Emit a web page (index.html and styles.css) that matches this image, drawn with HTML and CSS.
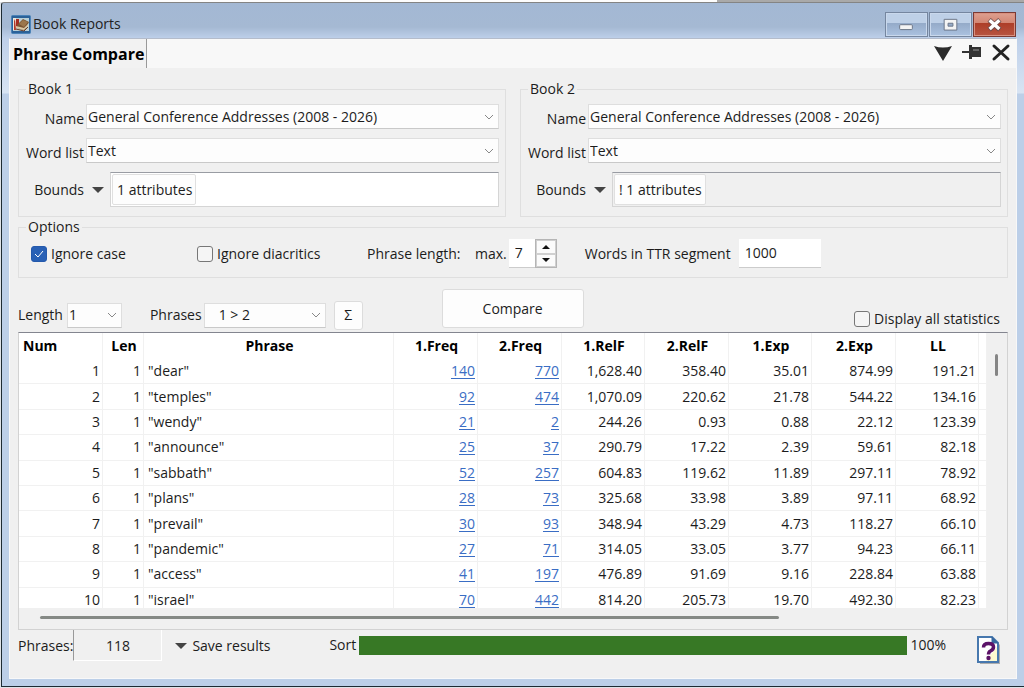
FILE: index.html
```html
<!DOCTYPE html>
<html lang="en">
<head>
<meta charset="utf-8">
<title>Book Reports</title>
<link rel="stylesheet" href="styles.css">
</head>
<body>
<div class="window">
  <header class="titlebar">
    <svg class="app-icon" viewBox="0 0 20 19" aria-hidden="true">
      <rect x=".5" y=".5" width="19" height="18" rx="1" fill="#2b6299" stroke="#4b83b8"/>
      <path d="M2 3h16v13H2z" fill="#b9cfd6"/>
      <path d="M2 3h3v12H2z" fill="#efe9de"/>
      <path d="M3 6l1-2 1 11H3z" fill="#b43a2a"/>
      <path d="M5 4h3v9H5z" fill="#a52c20"/>
      <path d="M6 10l6-6 6 3-4 8-6-1z" fill="#7a5433"/>
      <path d="M8 9l4-4 5 2-4 5z" fill="#9b764c"/>
      <path d="M5 11l8 2 4-4v2l-4 4-8-2z" fill="#d9c6a2"/>
      <path d="M5 14l8 2 4-4" fill="none" stroke="#6c3c24"/>
    </svg>
    <h1 class="window-title">Book Reports</h1>
    <div class="window-buttons">
      <button class="win-btn" aria-label="Minimize"><svg viewBox="0 0 42 23"><rect x="14" y="12" width="13" height="5" rx="1" fill="#f4f4f4" stroke="#6b7587"/></svg></button>
      <button class="win-btn" aria-label="Maximize"><svg viewBox="0 0 42 23"><path fill-rule="evenodd" d="M14.500 6.500h13v11h-13zM18.500 10.500v3h5v-3z" fill="#f4f4f4" stroke="#6b7587"/></svg></button>
      <button class="win-btn win-close" aria-label="Close"><svg viewBox="0 0 42 23"><path d="M15.500 7l11 10M26.500 7l-11 10" stroke="#6d4a4a" stroke-width="5"/><path d="M16 7.500l10 9M26 7.500l-10 9" stroke="#fff" stroke-width="3.500"/></svg></button>
    </div>
  </header>

  <main class="content">
    <div class="tabstrip">
      <button class="tab">Phrase Compare</button>
      <div class="tab-tools">
        <button class="tool" aria-label="Menu"><svg viewBox="0 0 20 20"><path d="M1 4q9 3 18 0l-9 15z" fill="#2b2b2b"/></svg></button>
        <button class="tool" aria-label="Pin"><svg viewBox="0 0 20 20"><path d="M0 9h8v2H0zM7 3h3v2h9v10h-9v2H7z" fill="#333"/><path d="M11 7h6v2h-6z" fill="#666"/></svg></button>
        <button class="tool" aria-label="Close tab"><svg viewBox="0 0 20 20"><path d="M3 4l14 13M17 4L3 17" stroke="#222" stroke-width="3" stroke-linecap="round"/></svg></button>
      </div>
    </div>

    <div class="panel">
      <div class="books">
        <fieldset class="group">
          <legend>Book 1</legend>
          <div class="field"><label for="name1">Name</label><select id="name1" class="select"><option>General Conference Addresses (2008 - 2026)</option></select></div>
          <div class="field"><label for="list1">Word list</label><select id="list1" class="select"><option>Text</option></select></div>
          <div class="field bounds"><button class="drop">Bounds<span class="caret"></span></button><div class="bounds-box"><button class="chip">1 attributes</button></div></div>
        </fieldset>
        <fieldset class="group">
          <legend>Book 2</legend>
          <div class="field"><label for="name2">Name</label><select id="name2" class="select"><option>General Conference Addresses (2008 - 2026)</option></select></div>
          <div class="field"><label for="list2">Word list</label><select id="list2" class="select"><option>Text</option></select></div>
          <div class="field bounds"><button class="drop">Bounds<span class="caret"></span></button><div class="bounds-box muted"><button class="chip">! 1 attributes</button></div></div>
        </fieldset>
      </div>

      <fieldset class="group options">
        <legend>Options</legend>
        <div class="options-row">
          <label class="check case"><input type="checkbox" checked>Ignore case</label>
          <label class="check diacritics"><input type="checkbox">Ignore diacritics</label>
          <span class="length-label">Phrase length:</span>
          <label for="max">max.</label>
          <div class="spinner">
            <input id="max" class="textbox" type="text" value="7">
            <div class="spin-buttons">
              <button aria-label="Increase"><span class="up"></span></button>
              <button aria-label="Decrease"><span class="down"></span></button>
            </div>
          </div>
          <label class="ttr-label" for="ttr">Words in TTR segment</label>
          <input id="ttr" class="textbox ttr" type="text" value="1000">
        </div>
      </fieldset>

      <div class="toolbar">
        <label for="len">Length</label>
        <select id="len" class="select len-select"><option>1</option></select>
        <label for="dir">Phrases</label>
        <select id="dir" class="select dir-select"><option>1 &gt; 2</option></select>
        <button class="button sigma">Σ</button>
        <button class="button compare">Compare</button>
        <label class="check all-stats"><input type="checkbox">Display all statistics</label>
      </div>

      <div class="grid-frame">
        <div class="grid-view">
          <table>
            <colgroup><col class="c-num"><col class="c-len"><col><col class="c-freq"><col class="c-freq"><col class="c-val"><col class="c-freq"><col class="c-val"><col class="c-freq"><col class="c-val"><col class="c-end"></colgroup>
            <thead><tr><th class="first">Num</th><th>Len</th><th>Phrase</th><th>1.Freq</th><th>2.Freq</th><th>1.RelF</th><th>2.RelF</th><th>1.Exp</th><th>2.Exp</th><th>LL</th><th></th></tr></thead>
            <tbody>
              <tr><td>1</td><td>1</td><td>"dear"</td><td><a href="#">140</a></td><td><a href="#">770</a></td><td>1,628.40</td><td>358.40</td><td>35.01</td><td>874.99</td><td>191.21</td><td></td></tr>
              <tr><td>2</td><td>1</td><td>"temples"</td><td><a href="#">92</a></td><td><a href="#">474</a></td><td>1,070.09</td><td>220.62</td><td>21.78</td><td>544.22</td><td>134.16</td><td></td></tr>
              <tr><td>3</td><td>1</td><td>"wendy"</td><td><a href="#">21</a></td><td><a href="#">2</a></td><td>244.26</td><td>0.93</td><td>0.88</td><td>22.12</td><td>123.39</td><td></td></tr>
              <tr><td>4</td><td>1</td><td>"announce"</td><td><a href="#">25</a></td><td><a href="#">37</a></td><td>290.79</td><td>17.22</td><td>2.39</td><td>59.61</td><td>82.18</td><td></td></tr>
              <tr><td>5</td><td>1</td><td>"sabbath"</td><td><a href="#">52</a></td><td><a href="#">257</a></td><td>604.83</td><td>119.62</td><td>11.89</td><td>297.11</td><td>78.92</td><td></td></tr>
              <tr><td>6</td><td>1</td><td>"plans"</td><td><a href="#">28</a></td><td><a href="#">73</a></td><td>325.68</td><td>33.98</td><td>3.89</td><td>97.11</td><td>68.92</td><td></td></tr>
              <tr><td>7</td><td>1</td><td>"prevail"</td><td><a href="#">30</a></td><td><a href="#">93</a></td><td>348.94</td><td>43.29</td><td>4.73</td><td>118.27</td><td>66.10</td><td></td></tr>
              <tr><td>8</td><td>1</td><td>"pandemic"</td><td><a href="#">27</a></td><td><a href="#">71</a></td><td>314.05</td><td>33.05</td><td>3.77</td><td>94.23</td><td>66.11</td><td></td></tr>
              <tr><td>9</td><td>1</td><td>"access"</td><td><a href="#">41</a></td><td><a href="#">197</a></td><td>476.89</td><td>91.69</td><td>9.16</td><td>228.84</td><td>63.88</td><td></td></tr>
              <tr><td>10</td><td>1</td><td>"israel"</td><td><a href="#">70</a></td><td><a href="#">442</a></td><td>814.20</td><td>205.73</td><td>19.70</td><td>492.30</td><td>82.23</td><td></td></tr>
            </tbody>
          </table>
        </div>
        <div class="scroll-y"><div class="thumb-y"></div></div>
        <div class="scroll-x"><div class="thumb-x"></div></div>
      </div>

      <footer class="statusbar">
        <span class="count-label">Phrases:</span>
        <output class="count">118</output>
        <button class="drop save"><span class="caret"></span>Save results</button>
        <div class="progress">
          <label for="sort">Sort</label>
          <progress id="sort" value="100" max="100"></progress>
          <span>100%</span>
        </div>
        <button class="help" aria-label="Help"><svg viewBox="0 0 24 29">
          <path d="M3 3h14l6 6v19H3z" fill="#777" opacity=".55"/>
          <path d="M1 1h14l6 6v19H1z" fill="#fff" stroke="#4778ae" stroke-width="2"/>
          <path d="M9 25h11V11z" fill="#fdf9cf"/>
          <path d="M15 1l6 6h-6z" fill="#39689f" stroke="#39689f"/>
          <path d="M6.500 11.500q0-4 5-4t5 3.500q0 2.500-3 4-2 1-2 3.500" fill="none" stroke="#5c1368" stroke-width="3.500"/>
          <circle cx="11.500" cy="22" r="2.200" fill="#5c1368"/>
        </svg></button>
      </footer>
    </div>
  </main>
</div>
</body>
</html>
```
FILE: styles.css
```css
* { box-sizing: border-box; }

body {
  display: flex;
  flex-direction: column;
  min-height: 100vh;
  margin: 0;
  padding: 2px 0 1px 1px;
  background: #dfe3e8 linear-gradient(90deg, #fdfdfd 70%, #a9a9a9 70%) no-repeat top / 100% 2px;
  color: #1c1c1c;
  font: 14px/20px "Open Sans", "Noto Sans", sans-serif;
}

button, input, select {
  font: inherit;
  color: inherit;
}

button {
  padding: 0;
  border: 0;
  background: none;
}

.window {
  flex: 1;
  display: flex;
  flex-direction: column;
  padding: 0 7px 7px;
  border: 1px solid #1d2b33;
  border-top-color: #848484;
  border-right: 0;
  border-radius: 3px 0 0 0;
  background: linear-gradient(#a3b8d4, #a5b9d3 24px, #bdcfe9 35px, #d8e4f3 90px, #bccfe8 91px);
}

.titlebar {
  display: flex;
  align-items: center;
  height: 35px;
  padding: 7px 1px 0 2px;
  gap: 2px;
}

.app-icon { width: 20px; height: 19px; }

.window-title {
  margin: 0;
  flex: 1;
  font-size: 14px;
  font-weight: 400;
  color: #222;
}

.window-buttons {
  display: flex;
  gap: 1px;
}

.win-btn {
  width: 43px;
  height: 25px;
  border: 1px solid #75869f;
  background: linear-gradient(#bed0e7 10px, #94aac8 10px, #abc2e0);
  box-shadow: inset 0 0 0 1px #c9d8ec;
}

.win-btn svg { display: block; width: 100%; }

.win-close {
  border-color: #7a3a34;
  background: linear-gradient(#dda090, #d38673 10px, #ad3d27 10px, #b75542);
  box-shadow: inset 0 0 0 1px #d9907f;
}

.content {
  flex: 1;
  display: flex;
  flex-direction: column;
  border: 1px solid #f8f8f8;
  border-top-color: #b4bccb;
  background: #f0f0f0;
}

.tabstrip {
  display: flex;
  justify-content: space-between;
  height: 29px;
  background: #f8f8f8;
}

.tab {
  padding: 0 2px 0 3px;
  border-right: 1px solid #999;
  background: #f2f2f2;
  color: #000;
  font-size: 16px;
  font-weight: 700;
}

.tab-tools {
  display: flex;
  align-items: flex-start;
  gap: 9px;
  padding: 3px 5px 0 0;
}

.tool { width: 20px; height: 20px; }
.tool svg { display: block; }

.panel {
  flex: 1;
  padding: 11px 8px 0;
}

.books {
  display: grid;
  grid-template-columns: 1fr 1fr;
  gap: 14px;
}

.group {
  min-width: 0;
  margin: 0;
  padding: 5px 6px 9px 0;
  border: 1px solid #dfdfdf;
}

.group legend {
  margin-left: 7px;
  padding: 0 2px;
}

.field {
  display: flex;
  align-items: flex-start;
  gap: 2px;
  height: 25px;
  margin-bottom: 9px;
}

.field label {
  width: 65px;
  padding-top: 5px;
  text-align: right;
  flex: none;
}

.select {
  width: 100%;
  height: 25px;
  padding: 0 24px 0 1px;
  border: 1px solid #dedede;
  border-bottom-color: #c9c9c9;
  border-radius: 0;
  appearance: none;
  background: #fdfdfd url("data:image/svg+xml,%3Csvg xmlns='http://www.w3.org/2000/svg' width='10' height='6'%3E%3Cpath d='M1 1l4 4 4-4' fill='none' stroke='%23888'/%3E%3C/svg%3E") no-repeat right 4px center;
}

.field .select { flex: 1; min-width: 0; }

.field.bounds {
  align-items: stretch;
  gap: 6px;
  height: auto;
  margin-bottom: 0;
}

.drop {
  display: flex;
  align-items: center;
  justify-content: flex-end;
  gap: 8px;
}

.bounds .drop { width: 85px; }

.caret {
  border: 6px solid transparent;
  border-top-color: #444;
  border-bottom: 0;
}

.bounds-box {
  flex: 1;
  height: 35px;
  padding: 1px;
  border: 1px solid #d5d5d5;
  border-top-color: #999ca3;
  background: #fff;
}

.muted { background: #f0f0f0; }

.chip {
  height: 31px;
  padding: 0 3px 0 4px;
  border: 1px solid #e0e0e0;
  border-radius: 2px;
  background: #fdfdfd;
}

.options { padding: 2px 6px 9px 12px; }
.options legend { margin-left: -5px; }

.options-row {
  display: flex;
  align-items: center;
}

.check {
  display: flex;
  align-items: center;
  gap: 4px;
}

.check input {
  width: 16px;
  height: 16px;
  margin: 0;
  border: 1px solid #777;
  border-radius: 3px;
  appearance: none;
  background: #f5f5f5;
}

.check input:checked {
  border-color: #2459ac;
  background: #2860b5 url("data:image/svg+xml,%3Csvg xmlns='http://www.w3.org/2000/svg' width='10' height='8'%3E%3Cpath d='M1 4l3 3 5-6' fill='none' stroke='%23fff'/%3E%3C/svg%3E") no-repeat center;
}

.case { width: 166px; }
.diacritics { width: 170px; }
.length-label { width: 108px; }

.textbox {
  height: 29px;
  border: 0;
  border-bottom: 1px solid #ccc;
  background: #fff;
  padding: 0 6px 2px;
}

.spinner {
  display: flex;
  margin: 0 28px 0 2px;
}

.spinner .textbox { width: 26px; }

.spin-buttons {
  display: grid;
  width: 22px;
  border: 1px solid #b5b5b5;
}

.spin-buttons button {
  display: grid;
  place-items: center;
  border: 1px solid #d0d0d0;
  background: #fbfbfb;
}

.up, .down {
  border: 4px solid transparent;
}
.up { border-top: 0; border-bottom-color: #111; }
.down { border-bottom: 0; border-top-color: #111; }

.ttr-label { margin-right: 8px; }
.ttr { width: 82px; }

.toolbar {
  display: flex;
  align-items: center;
  height: 54px;
  padding-top: 20px;
}

.len-select { width: 55px; margin: 0 28px 0 4px; }
.dir-select { width: 122px; margin: 0 8px 0 2px; padding-left: 14px; }

.button {
  border: 1px solid #dcdcdc;
  border-radius: 3px;
  background: #fdfdfd;
}

.sigma { width: 29px; height: 29px; }

.compare {
  align-self: flex-end;
  width: 142px;
  height: 39px;
  margin: 0 0 4px 79px;
}

.all-stats {
  margin: 8px 8px 0 auto;
}

.grid-frame {
  display: grid;
  grid-template: 275px 21px / 1fr 20px;
  border: 1px solid #d2d2d2;
  border-top-color: #83858f;
}

.grid-view {
  overflow: hidden;
  background: #fff;
}

table {
  width: 100%;
  height: 280px;
  table-layout: fixed;
  border-collapse: separate;
  border-spacing: 0;
}

.c-num { width: 84px; }
.c-len { width: 41px; }
.c-freq { width: 84px; }
.c-val { width: 83px; }
.c-end { width: 8px; }

th, td {
  padding: 0 2px 0 4px;
  border-right: 1px solid #f1f1f1;
  border-bottom: 1px solid #f1f1f1;
  text-align: right;
  white-space: nowrap;
}

th {
  height: 26px;
  border-bottom: 0;
  color: #000;
  text-align: center;
}

.first { text-align: left; }
td:nth-child(3) { text-align: left; }
a { color: #3a6dc4; text-underline-offset: 2px; }

.scroll-y { padding: 21px 8px 0; }

.thumb-y {
  width: 3px;
  height: 22px;
  border-radius: 2px;
  background: #858585;
}

.scroll-x { padding: 8px 0 0 21px; }

.thumb-x {
  width: 78%;
  height: 3px;
  border-radius: 2px;
  background: #858985;
}

.statusbar {
  display: flex;
  align-items: flex-start;
}

.count-label { padding-top: 6px; }

.count {
  width: 89px;
  margin-right: 13px;
  padding: 6px 0 4px;
  border: 1px solid #fff;
  border-width: 0 1px 1px 0;
  border-left: 1px solid #999;
  text-align: center;
}

.save { gap: 5px; padding-top: 6px; }

.progress {
  flex: 1;
  display: flex;
  align-items: center;
  gap: 3px;
  margin: 5px 31px 0 59px;
}

progress {
  flex: 1;
  min-width: 0;
  height: 19px;
  border: 0;
  appearance: none;
}

progress::-webkit-progress-bar { background: #e6e6e6; }
progress::-webkit-progress-value { background: #377825; }

.help {
  width: 24px;
  height: 29px;
  margin: 6px 7px 0 0;
}

.help svg { display: block; }
```
